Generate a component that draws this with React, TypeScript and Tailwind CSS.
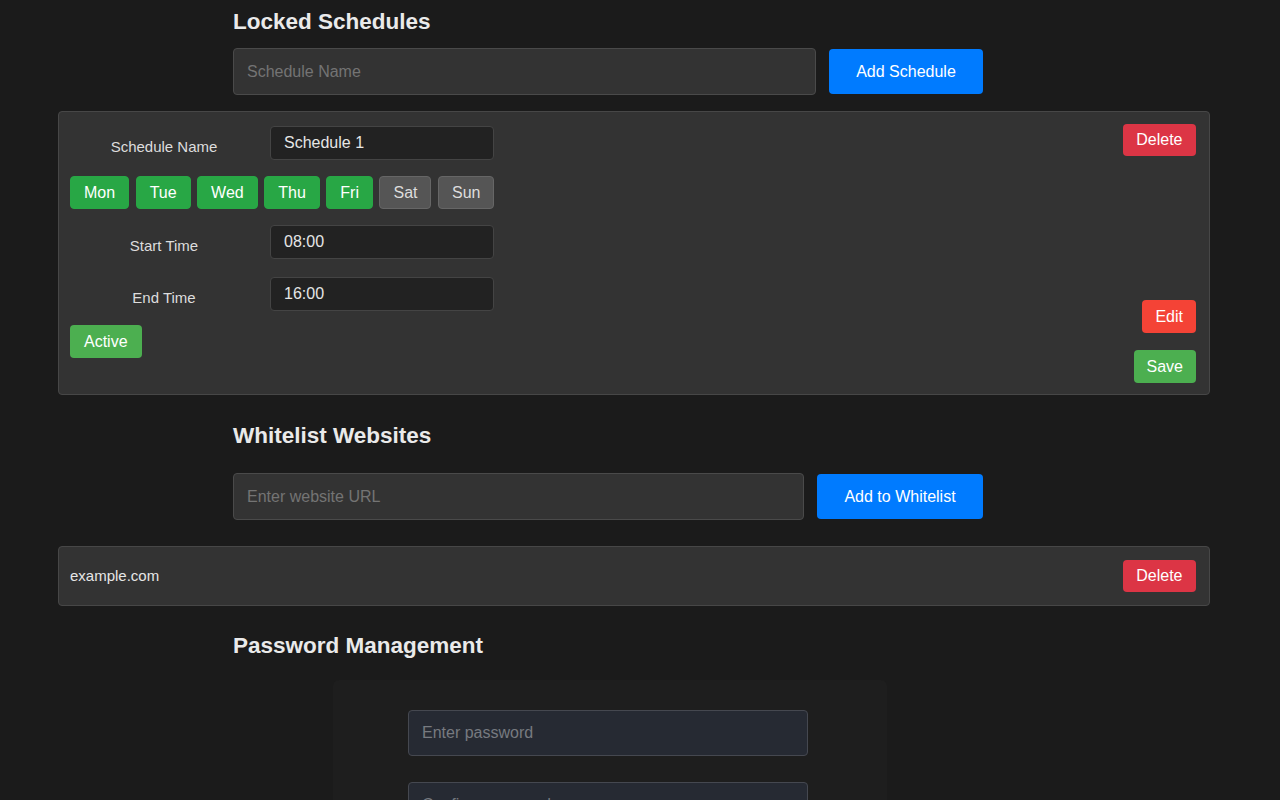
import React from "react";

const days = [
  { label: "Mon", on: true },
  { label: "Tue", on: true },
  { label: "Wed", on: true },
  { label: "Thu", on: true },
  { label: "Fri", on: true },
  { label: "Sat", on: false },
  { label: "Sun", on: false },
];

const FieldRow: React.FC<{ label: string; value: string; className?: string }> = ({
  label,
  value,
  className,
}) => (
  <div className={"flex items-start " + (className || "")}>
    <div className="w-[188px] pt-[12px] text-center text-[15px] leading-[17px] text-[#dddddd]">
      {label}
    </div>
    <input
      readOnly
      value={value}
      className="ml-[12px] h-[34px] w-[224px] rounded-[4px] border border-[#444444] bg-[#222222] px-[13px] text-[16px] text-[#e6e6e6] outline-none"
    />
  </div>
);

const App: React.FC = () => {
  return (
    <div className="min-h-[800px] w-full overflow-hidden bg-[#1b1b1b] font-[family-name:'Liberation_Sans',Arial,sans-serif] text-[#eeeeee]">
      {/* Locked Schedules */}
      <div className="ml-[233px] w-[750px] pt-[9px]">
        <h2 className="h-[26px] text-[22.5px] font-bold leading-[26px] text-[#eaeaea]">
          Locked Schedules
        </h2>
        <div className="mt-[13px] flex items-center gap-[13px]">
          <input
            placeholder="Schedule Name"
            className="h-[47px] flex-1 rounded-[4px] border border-[#4a4a4a] bg-[#333333] px-[13px] text-[16px] text-[#eeeeee] outline-none placeholder:text-[#747474]"
          />
          <button className="h-[45px] w-[154px] rounded-[4px] bg-[#007bff] text-[16px] text-white">
            Add Schedule
          </button>
        </div>
      </div>

      <div className="ml-[58px] mt-[16px] box-border flex h-[284px] w-[1152px] rounded-[4px] border border-[#474747] bg-[#333333] pb-[11px] pl-[11px] pr-[13px] pt-[12px]">
        <div className="w-[424px] pt-[2px]">
          <FieldRow label="Schedule Name" value="Schedule 1" />
          <div className="mt-[16px] flex gap-[6.5px]">
            {days.map((d) => (
              <button
                key={d.label}
                className={
                  d.on
                    ? "flex h-[33px] items-center justify-center rounded-[4px] border border-[#28a745] bg-[#28a745] px-[13px] text-[16px] text-white"
                    : "flex h-[33px] items-center justify-center rounded-[4px] border border-[#666666] bg-[#555555] px-[13px] text-[16px] text-[#dddddd]"
                }
              >
                {d.label}
              </button>
            ))}
          </div>
          <FieldRow className="mt-[16px]" label="Start Time" value="08:00" />
          <FieldRow className="mt-[18px]" label="End Time" value="16:00" />
          <button className="mt-[14px] h-[33px] rounded-[4px] bg-[#4caf50] px-[14px] text-[16px] text-white">
            Active
          </button>
        </div>
        <div className="flex flex-1 flex-col items-end justify-between">
          <button className="h-[32px] rounded-[4px] bg-[#dc3545] px-[13.5px] text-[16px] text-white">
            Delete
          </button>
          <div className="flex flex-col items-end gap-[17px]">
            <button className="h-[33px] rounded-[4px] bg-[#f44336] px-[13px] text-[16px] text-white">
              Edit
            </button>
            <button className="h-[33px] rounded-[4px] bg-[#4caf50] px-[13px] text-[16px] text-white">
              Save
            </button>
          </div>
        </div>
      </div>

      {/* Whitelist Websites */}
      <div className="ml-[233px] mt-[28px] w-[750px]">
        <h2 className="h-[26px] text-[22.5px] font-bold leading-[26px] text-[#eaeaea]">
          Whitelist Websites
        </h2>
        <div className="mt-[24px] flex items-center gap-[13px]">
          <input
            placeholder="Enter website URL"
            className="h-[47px] flex-1 rounded-[4px] border border-[#4a4a4a] bg-[#333333] px-[13px] text-[16px] text-[#eeeeee] outline-none placeholder:text-[#747474]"
          />
          <button className="h-[45px] w-[166px] rounded-[4px] bg-[#007bff] text-[16px] text-white">
            Add to Whitelist
          </button>
        </div>
      </div>

      <div className="ml-[58px] mt-[26px] box-border flex h-[60px] w-[1152px] items-center justify-between rounded-[4px] border border-[#474747] bg-[#333333] pl-[11px] pr-[13px]">
        <span className="text-[15px] text-[#e6e6e6]">example.com</span>
        <button className="h-[32px] rounded-[4px] bg-[#dc3545] px-[13.5px] text-[16px] text-white">
          Delete
        </button>
      </div>

      {/* Password Management */}
      <div className="ml-[233px] mt-[27px] w-[750px]">
        <h2 className="h-[26px] text-[22.5px] font-bold leading-[26px] text-[#eaeaea]">
          Password Management
        </h2>
      </div>
      <div className="ml-[333px] mt-[21px] w-[554px] rounded-[6px] bg-[#1e1e1e] pt-[30px] pb-[40px]">
        <div className="ml-[75px] flex w-[400px] flex-col gap-[26px]">
          <input
            type="password"
            placeholder="Enter password"
            className="h-[46px] w-full rounded-[4px] border border-[#454850] bg-[#262a33] px-[13px] text-[16px] text-[#eeeeee] outline-none placeholder:text-[#777a80]"
          />
          <input
            type="password"
            placeholder="Confirm password"
            className="h-[46px] w-full rounded-[4px] border border-[#454850] bg-[#262a33] px-[13px] text-[16px] text-[#eeeeee] outline-none placeholder:text-[#777a80]"
          />
        </div>
      </div>
    </div>
  );
};

export default App;
